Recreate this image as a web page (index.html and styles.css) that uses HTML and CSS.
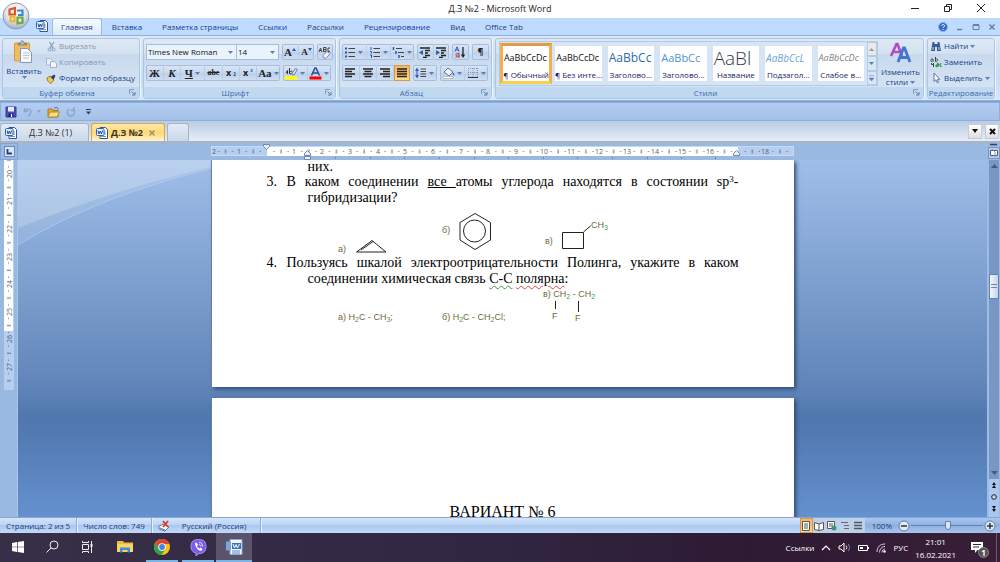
FILE: index.html
```html
<!DOCTYPE html>
<html lang="ru">
<head>
<meta charset="utf-8">
<title>Д.З №2 - Microsoft Word</title>
<link rel="stylesheet" href="styles.css">
</head>
<body>
<svg class="defs" width="0" height="0" aria-hidden="true">
  <defs>
    <symbol id="arrow" viewBox="0 0 5 3"><path d="M0 0h5L2.500 3z" fill="#5b7fb5"/></symbol>
    <symbol id="launcher" viewBox="0 0 7 7"><path d="M.5 5V.5H5" fill="none" stroke="#7f9bc2"/><path d="M2.500 2.500l3 3M6 3v3H3" fill="none" stroke="#5f7da8"/></symbol>
    <symbol id="worddoc" viewBox="0 0 12 12"><path d="M4 .5h5.500l2 2v9H4z" fill="#fff" stroke="#2d569e"/><path d="M8 5h2M8 7h2M5 9.500h5" stroke="#6f93cd"/><rect x=".5" y="1.500" width="7.500" height="7" rx="1" fill="#e8f0fb" stroke="#2d5fb0"/><path d="M2 3.500l1 3.500 1.300-3L5.500 7l1-3.500" fill="none" stroke="#1c4ba0"/></symbol>
    <symbol id="bin" viewBox="0 0 12 12"><path d="M2.500 2h2v2h3V2h2l1.500 9H7V7H5v4H1z" fill="#3c5d96"/><path d="M3 7v3M9 7v3" stroke="#b8cdec"/></symbol>
    <symbol id="lines-l" viewBox="0 0 12 10"><path d="M1 1h10M1 3.500h7M1 6h10M1 8.500h7" stroke="#222" stroke-width="1.300"/></symbol>
    <symbol id="lines-c" viewBox="0 0 12 10"><path d="M1 1h10M2.500 3.500h7M1 6h10M2.500 8.500h7" stroke="#222" stroke-width="1.300"/></symbol>
    <symbol id="lines-r" viewBox="0 0 12 10"><path d="M1 1h10M4 3.500h7M1 6h10M4 8.500h7" stroke="#222" stroke-width="1.300"/></symbol>
    <symbol id="lines-j" viewBox="0 0 12 10"><path d="M1 1h10M1 3.500h10M1 6h10M1 8.500h10" stroke="#222" stroke-width="1.300"/></symbol>
  </defs>
</svg>

<header class="titlebar">
  <h1>Д.З №2 - Microsoft Word</h1>
  <div class="winbtns">
    <button aria-label="Свернуть"><svg width="10" height="10"><path d="M1 5.500h8" stroke="#222"/></svg></button>
    <button aria-label="Восстановить"><svg width="10" height="10"><path d="M1.500 3.500h5v5h-5zM3.500 3V1.500h5v5H7" fill="none" stroke="#222"/></svg></button>
    <button aria-label="Закрыть"><svg width="10" height="10"><path d="M1 1l8 8M9 1L1 9" stroke="#222"/></svg></button>
  </div>
</header>

<nav class="tabs">
  <button class="office" aria-label="Кнопка Office">
    <svg width="28" height="28" viewBox="0 0 28 28">
      <defs><radialGradient id="orb" cx=".5" cy=".3" r=".75"><stop offset="0" stop-color="#fff"/><stop offset=".55" stop-color="#dfe5ed"/><stop offset="1" stop-color="#93a5bf"/></radialGradient></defs>
      <circle cx="14" cy="14" r="13" fill="url(#orb)" stroke="#8d9db5"/>
      <g fill="none" stroke-width="2.200"><path d="M13 12.500H7.500V7.500l5.500-1.500z" stroke="#e0542a"/><path d="M15 8.500h5.500v4.500H16" stroke="#3d86d6"/><path d="M12.500 14.500H8.500v4.500l4 .5z" stroke="#f0b22e"/><path d="M15.500 15.500h5v5l-5 1z" stroke="#6cab38"/></g>
    </svg>
  </button>
  <svg class="tabicon" width="12" height="12"><use href="#worddoc"/></svg>
  <button class="tab current">Главная</button>
  <button class="tab">Вставка</button>
  <button class="tab">Разметка страницы</button>
  <button class="tab">Ссылки</button>
  <button class="tab">Рассылки</button>
  <button class="tab">Рецензирование</button>
  <button class="tab">Вид</button>
  <button class="tab">Office Tab</button>
  <div class="docbtns">
    <button aria-label="Справка"><svg width="10" height="10"><circle cx="5" cy="5" r="4.500" fill="#2e6bd0" stroke="#8fb2e6"/><path d="M3.500 4c0-2 3-2 3 0 0 1-1.500 1-1.500 2M5 7v1" fill="none" stroke="#fff"/></svg></button>
    <button aria-label="Свернуть окно"><svg width="8" height="8"><path d="M1 6.500h5" stroke="#6b7f9f" stroke-width="1.500"/></svg></button>
    <button aria-label="Восстановить окно"><svg width="8" height="8"><path d="M1 2h6v4.500H1z" fill="none" stroke="#6b7f9f"/><path d="M1 2h6" stroke="#6b7f9f" stroke-width="2"/></svg></button>
    <button aria-label="Закрыть окно"><svg width="8" height="8"><path d="M1.500 1.500l5 5M6.500 1.500l-5 5" stroke="#6b7f9f" stroke-width="1.500"/></svg></button>
  </div>
</nav>

<section class="ribbon">
  <div class="group">
    <div class="body clip">
      <button class="big">
        <svg width="22" height="23"><rect x="1.500" y="3" width="15" height="18" rx="1" fill="#eebd62" stroke="#d59b3a"/><path d="M5 5V3.500h2.500C7.500 0 11 0 11 3.500h2.500V5z" fill="#b9c0ca" stroke="#777f8c"/><path d="M7.500 8.500h7l4 4v10h-11z" fill="#f7f9fd" stroke="#8397b8"/><path d="M10 13h6M10 15.500h6M10 18h6" stroke="#b9c5d9"/></svg>
        <span>Вставить</span><svg width="5" height="3"><use href="#arrow"/></svg>
      </button>
      <div class="stack">
        <button class="cmd off"><svg width="11" height="11"><path d="M3.500 1l3.500 6M8 1L4 7" stroke="#8c9db8" stroke-width="1.300"/><circle cx="3.500" cy="8.500" r="1.500" fill="none" stroke="#8c9db8"/><circle cx="7.500" cy="8.500" r="1.500" fill="none" stroke="#8c9db8"/></svg>Вырезать</button>
        <button class="cmd off"><svg width="11" height="11"><path d="M.5 1.500h4l2 2V8h-6z" fill="#e9eef6" stroke="#a9b8d0"/><path d="M4.500 4.500h4l2 2v4h-6z" fill="#f2f5fa" stroke="#a0b0ca"/></svg>Копировать</button>
        <button class="cmd"><svg width="11" height="11"><path d="M1 5l3-2 4 4-3 3.500C3 9.500 1 8 1 5z" fill="#f0c75e" stroke="#a37a26"/><path d="M4.500 4L8 1.500l1.500 1.200L7.500 7z" fill="#34456b"/></svg>Формат по образцу</button>
      </div>
    </div>
    <h2>Буфер обмена<svg width="7" height="7"><use href="#launcher"/></svg></h2>
  </div>

  <div class="group">
    <div class="body rows">
      <div class="row">
        <div class="combos"><label class="combo fontname"><select aria-label="Шрифт"><option>Times New Roman</option></select><svg width="5" height="3"><use href="#arrow"/></svg></label><label class="combo fontsize"><select aria-label="Размер шрифта"><option>14</option></select><svg width="5" height="3"><use href="#arrow"/></svg></label></div>
        <div class="set"><button class="w16 serif" aria-label="Увеличить размер">А<svg width="4" height="8"><path d="M0 3l2-3 2 3z" fill="#2c5aa8"/></svg></button><button class="w16 serif small" aria-label="Уменьшить размер">А<svg width="4" height="8"><path d="M0 0l2 3 2-3z" fill="#2c5aa8"/></svg></button></div>
        <div class="set"><button class="w16" aria-label="Очистить формат"><svg width="13" height="13"><path d="M1 6l1.500-4L4 6M1.500 4.500h2M5.500 1.500h2.500v4H5.500zM5.500 3.500H8M12 2h-2v3.500h2" fill="none" stroke="#444"/><path d="M5 9.500l4-4 3 2-4 5-3-1z" fill="#f3f5fb" stroke="#7d8cab"/></svg></button></div>
      </div>
      <div class="row">
        <div class="set"><button class="w17 serif b">Ж</button><button class="w17 serif b i">К</button><button class="w24 serif b"><u>Ч</u><svg width="5" height="3"><use href="#arrow"/></svg></button><button class="w18 serif strike"><s>abc</s></button><button class="w17 b">x<sub>₂</sub></button><button class="w17 b">x<sup>²</sup></button><button class="w24 serif b">Аа<svg width="5" height="3"><use href="#arrow"/></svg></button></div>
        <div class="set"><button class="w24" aria-label="Выделение цветом"><svg width="13" height="13"><path d="M1 6l1.500-2.500V7M4.500 1v6M5 5c2-3 4 2 0 2" fill="none" stroke="#333"/><path d="M6.500 7l4-5.500 2 1L9 8z" fill="#d9dfec" stroke="#6a7fa8"/><path d="M0 9h12v3.500H0z" fill="#ff0"/></svg><svg width="5" height="3"><use href="#arrow"/></svg></button><button class="w24" aria-label="Цвет текста"><svg width="13" height="13"><path d="M2.500 8.500L6 1h1l3.500 7.500M4 6h5" fill="none" stroke="#2c4f8f" stroke-width="1.600"/><path d="M.5 9.500h12v3H.5z" fill="#f00"/></svg><svg width="5" height="3"><use href="#arrow"/></svg></button></div>
      </div>
    </div>
    <h2>Шрифт<svg width="7" height="7"><use href="#launcher"/></svg></h2>
  </div>

  <div class="group">
    <div class="body rows">
      <div class="row">
        <div class="set"><button class="w24" aria-label="Маркеры"><svg width="12" height="11"><path d="M1 1.500h2M1 5.500h2M1 9.500h2" stroke="#2c5aa8" stroke-width="2"/><path d="M4.500 1.500H11M4.500 5.500H11M4.500 9.500H11" stroke="#444"/></svg><svg width="5" height="3"><use href="#arrow"/></svg></button><button class="w24" aria-label="Нумерация"><svg width="12" height="11"><path d="M2 0v3M1 4.500h1.500v2M1 8h1.500v3" fill="none" stroke="#2c5aa8"/><path d="M4.500 1.500H11M4.500 5.500H11M4.500 9.500H11" stroke="#444"/></svg><svg width="5" height="3"><use href="#arrow"/></svg></button><button class="w24" aria-label="Многоуровневый список"><svg width="13" height="11"><path d="M1.500 0v3M4 4v3M7 8v3" stroke="#2c5aa8" stroke-width="1.500"/><path d="M4 1.500h6M6 5.500h6M9 9.500h3" stroke="#444"/></svg><svg width="5" height="3"><use href="#arrow"/></svg></button></div>
        <div class="set"><button class="w16" aria-label="Уменьшить отступ"><svg width="12" height="11"><path d="M1 1h10M6 3.500h5M6 6h3M6 8.500h5M4 10.500h4" stroke="#222" stroke-width="1.300"/><path d="M4 3L0 5.500 4 8z" fill="#2c5fb5"/></svg></button><button class="w16" aria-label="Увеличить отступ"><svg width="12" height="11"><path d="M1 1h10M6 3.500h5M6 6h3M6 8.500h5M4 10.500h4" stroke="#222" stroke-width="1.300"/><path d="M1 3l4 2.500L1 8z" fill="#2c5fb5"/></svg></button></div>
        <div class="set"><button class="w17" aria-label="Сортировка"><svg width="12" height="13"><path d="M1 5.500L3 .8l2 4.700M2 4h2" fill="none" stroke="#2c5aa8"/><path d="M5 12V7.500H3.500c-2 0-2 2.500 0 2.500H5M3.500 10l-2 2" fill="none" stroke="#a33"/><path d="M9 1v9" stroke="#222" stroke-width="1.300"/><path d="M6.800 8.500h4.400L9 12z" fill="#222"/></svg></button></div>
        <div class="set"><button class="w17 b" aria-label="Знаки абзаца">¶</button></div>
      </div>
      <div class="row">
        <div class="set"><button class="w17" aria-label="По левому краю"><svg width="12" height="10"><use href="#lines-l"/></svg></button><button class="w17" aria-label="По центру"><svg width="12" height="10"><use href="#lines-c"/></svg></button><button class="w17" aria-label="По правому краю"><svg width="12" height="10"><use href="#lines-r"/></svg></button><button class="w17 on" aria-label="По ширине"><svg width="12" height="10"><use href="#lines-j"/></svg></button></div>
        <div class="set"><button class="w24" aria-label="Интервал"><svg width="12" height="12"><path d="M0 4l2-3.500L4 4zM0 8l2 3.500L4 8z" fill="#2c5fb5"/><path d="M2 3v6" stroke="#2c5fb5"/><path d="M5.500 2H11M5.500 4.500H11M5.500 7H11M5.500 9.500H11" stroke="#444"/></svg><svg width="5" height="3"><use href="#arrow"/></svg></button></div>
        <div class="set"><button class="w24" aria-label="Заливка"><svg width="13" height="12"><path d="M2 5l4-4 5 4-4 4z" fill="#edf1f8" stroke="#5f7396"/><path d="M10.500 5c2 1 2 3 1.500 4-1-1-1.500-2-1.500-4z" fill="#3c6ab8"/><path d="M1 9.500h10v2H1z" fill="#fff" stroke="#999" stroke-width=".5"/></svg><svg width="5" height="3"><use href="#arrow"/></svg></button><button class="w24" aria-label="Границы"><svg width="12" height="12"><path d="M1.500 1v9M6 1v9M10.500 1v9M1 1.500h10M1 5.500h10" stroke="#8494ad" stroke-dasharray="1 1"/><path d="M1 10.500h10" stroke="#333"/></svg><svg width="5" height="3"><use href="#arrow"/></svg></button></div>
      </div>
    </div>
    <h2>Абзац<svg width="7" height="7"><use href="#launcher"/></svg></h2>
  </div>

  <div class="group wide">
    <div class="body styles">
      <div class="gallery">
        <button class="tile sel"><span class="pv">AaBbCcDc</span><span>¶ Обычный</span></button>
        <button class="tile"><span class="pv">AaBbCcDc</span><span>¶ Без инте...</span></button>
        <button class="tile"><span class="pv h1">AaBbCc</span><span>Заголово...</span></button>
        <button class="tile"><span class="pv h2">AaBbCc</span><span>Заголово...</span></button>
        <button class="tile"><span class="pv ttl">AaBl</span><span>Название</span></button>
        <button class="tile"><span class="pv sub">AaBbCcL</span><span>Подзагол...</span></button>
        <button class="tile"><span class="pv weak">AaBbCcDc</span><span>Слабое в...</span></button>
        <div class="galscroll">
          <button class="dim" aria-label="Вверх"><svg width="5" height="3"><path d="M0 3h5L2.500 0z" fill="#9a9a9a"/></svg></button>
          <button aria-label="Вниз"><svg width="5" height="3"><use href="#arrow"/></svg></button>
          <button aria-label="Все стили"><svg width="5" height="6"><path d="M0 .5h5M0 3h5L2.500 6z" fill="#5b7fb5" stroke="#5b7fb5" stroke-width=".5"/></svg></button>
        </div>
      </div>
      <button class="big change">
        <svg width="24" height="22"><path d="M2 14L7.500 2h1L13 14M4.500 10h6" fill="none" stroke="#b04fc0" stroke-width="2.600"/><path d="M9 20l5.500-14h1L21 20M11.500 15.500h7" fill="none" stroke="#3f77cc" stroke-width="2.800"/></svg>
        <span>Изменить</span><span>стили <svg width="5" height="3"><use href="#arrow"/></svg></span>
      </button>
    </div>
    <h2>Стили<svg width="7" height="7"><use href="#launcher"/></svg></h2>
  </div>

  <div class="group">
    <div class="body edit">
      <div class="stack">
        <button class="cmd"><svg width="12" height="12"><use href="#bin"/></svg>Найти <svg width="5" height="3"><use href="#arrow"/></svg></button>
        <button class="cmd"><svg width="12" height="12"><path d="M2 5.500c-2 0-1.500-3 1-2.500v3M5.500 1v4.500c3 0 3-3 0-2.500" fill="none" stroke="#444"/><path d="M1.500 7v1.500h2V7v4" fill="none" stroke="#444"/><path d="M7 7.500c2-.5 2 3 0 3s-1-2 1-1.500M11.500 8c-2-1-2 3 0 2.500" fill="none" stroke="#2f9a3c" stroke-width="1.300"/></svg>Заменить</button>
        <button class="cmd"><svg width="12" height="12"><path d="M4 1v8.500l2-1.700 1.300 3 1.300-.6L7.300 7.300h2.500z" fill="#fff" stroke="#5a77a8"/></svg>Выделить <svg width="5" height="3"><use href="#arrow"/></svg></button>
      </div>
    </div>
    <h2 class="plain">Редактирование</h2>
  </div>
</section>

<div class="qat">
  <button aria-label="Сохранить"><svg width="12" height="12"><path d="M1 1h10v10H1z" fill="#4a4fb5" stroke="#34389a"/><path d="M3 1h6v4.500H3z" fill="#e6ebf8"/><path d="M3.500 7.500h5V11h-5z" fill="#1f2360"/><path d="M6.500 8v3" stroke="#fff" stroke-width="1.300"/></svg></button>
  <button aria-label="Отменить"><svg width="10" height="10"><path d="M1.500 1v3.500H5M2 4c3-3.500 8-1 5 3L5 9.500" fill="none" stroke="#8aa6cf" stroke-width="1.500"/></svg><svg width="4" height="3"><path d="M0 0h4L2 3z" fill="#8aa6cf"/></svg></button>
  <button aria-label="Открыть"><svg width="13" height="12"><path d="M1 3h4l1 1.500h5V11H1z" fill="#e2a838" stroke="#a97a20"/><path d="M3 6h9.500L10 11H1z" fill="#fbdb83" stroke="#b58a2c"/><path d="M7 2.500c2-2 4-1 4 1" fill="none" stroke="#3c63a8"/></svg></button>
  <button aria-label="Повторить"><svg width="10" height="10"><path d="M3 2C0 4.500 1.500 9 5 9s5-5 2-7M4.500 3.500H8V0" fill="none" stroke="#8aa6cf" stroke-width="1.500"/></svg></button>
  <button aria-label="Настройка панели"><svg width="5" height="6"><path d="M0 .5h5" stroke="#23406f"/><path d="M0 2.500h5L2.500 5.500z" fill="#23406f"/></svg></button>
</div>

<nav class="doctabs">
  <button class="dt"><svg width="12" height="12"><use href="#worddoc"/></svg>Д.З №2 (1)</button>
  <button class="dt active"><svg width="12" height="12"><use href="#worddoc"/></svg>Д.З №2<svg class="x" width="6" height="6"><path d="M.5.5l5 5M5.500.5l-5 5" stroke="#9a8a63" stroke-width="1.300"/></svg></button>
  <button class="dt blank" aria-label="Новая вкладка"></button>
  <div class="dtright">
    <button aria-label="Список вкладок"><svg width="6" height="4"><path d="M0 0h6L3 4z" fill="#111"/></svg></button>
    <button aria-label="Закрыть вкладку"><svg width="7" height="7"><path d="M1 1l5 5M6 1L1 6" stroke="#111" stroke-width="2"/></svg></button>
  </div>
</nav>

<main class="work">
  <div class="corner"><button aria-label="Табуляция"><svg width="6" height="6"><path d="M1.500 0v4.500H6" fill="none" stroke="#26406e" stroke-width="1.800"/></svg></button></div>
  <div class="hruler">
    <svg width="584" height="17" viewBox="211 143 584 17">
      <defs><pattern id="ticks" x="267" y="143" width="27.720" height="17" patternUnits="userSpaceOnUse"><path d="M6.500 8h1v1h-1zM20.500 8h1v1h-1zM13.500 6.500h1v4h-1z" fill="#566a8c"/></pattern></defs>
      <rect x="211.500" y="146.500" width="582" height="9" fill="#b6cff0" stroke="#c8daf3"/>
      <rect x="267" y="147" width="471" height="9" fill="#fff"/>
      <rect x="215" y="143" width="573" height="17" fill="url(#ticks)"/>
      <g class="num"><text x="214" y="154">2</text><text x="239" y="154">1</text><text x="294" y="154">1</text><text x="322" y="154">2</text><text x="350" y="154">3</text><text x="378" y="154">4</text><text x="405" y="154">5</text><text x="433" y="154">6</text><text x="461" y="154">7</text><text x="488" y="154">8</text><text x="516" y="154">9</text><text x="544" y="154">10</text><text x="571" y="154">11</text><text x="599" y="154">12</text><text x="627" y="154">13</text><text x="655" y="154">14</text><text x="682" y="154">15</text><text x="710" y="154">16</text><text x="765" y="154">18</text></g>
      <g fill="#eef3fb" stroke="#6f88b0"><path d="M263.500 144.500h6v2l-3 3-3-3z"/><path d="M304.500 155.500v-2l3-3 3 3v2zM304.500 156.500h6v3h-6z"/><path d="M733.500 155.500v-2l3-3 3 3v2z"/></g>
      <path d="M335.500 157v2M370.500 157v2M404.500 157v2M439.500 157v2M474.500 157v2M508.500 157v2M543.500 157v2M577.500 157v2M612.500 157v2M647.500 157v2M681.500 157v2M715.500 157v2" stroke="#6f88b0"/>
    </svg>
  </div>
  <div class="split"><svg width="13" height="17"><path d="M3 1.500h7" stroke="#2c4370" stroke-width="1.500"/><rect x="1.500" y="4.500" width="11" height="11" fill="#b7c9e4" stroke="#7e97c0"/><path d="M3.500 7.500h7v5h-7z" fill="#fff" stroke="#4c5c80"/><path d="M5 6l3 3v5" fill="none" stroke="#8a93b8"/></svg></div>

  <div class="vruler">
    <svg width="17" height="230" viewBox="0 160 17 230">
      <defs><pattern id="vticks" x="0" y="173.500" width="17" height="27.600" patternUnits="userSpaceOnUse"><path d="M8 6.500h1v1H8zM8 20.500h1v1H8zM7 13.500h4v1H7z" fill="#566a8c"/></pattern></defs>
      <rect x="4" y="160" width="10" height="230" fill="#b6cff0"/>
      <rect x="4" y="160" width="9" height="171" fill="#fff"/>
      <rect x="4" y="160" width="10" height="225" fill="url(#vticks)"/>
      <g class="num"><text transform="translate(12 174) rotate(-90)">20</text><text transform="translate(12 201) rotate(-90)">21</text><text transform="translate(12 229) rotate(-90)">22</text><text transform="translate(12 257) rotate(-90)">23</text><text transform="translate(12 284) rotate(-90)">24</text><text transform="translate(12 312) rotate(-90)">25</text><text transform="translate(12 339) rotate(-90)">26</text><text transform="translate(12 367) rotate(-90)">27</text></g>
    </svg>
  </div>

  <div class="canvas">
    <svg class="swoosh" width="210" height="90"><path d="M0 68Q100 28 210 3V0H0z" fill="#fff" opacity=".2"/><path d="M0 85Q80 35 210 4V0H0z" fill="#fff" opacity=".1"/><path d="M0 85Q80 35 210 4" fill="none" stroke="#c3d8f3" opacity=".5"/></svg>
    <article class="page first">
      <p class="item cont">них.</p>
      <p class="item"><span class="n">3.</span>В каком соединении <u>все </u>атомы углерода находятся в состоянии sp<sup>3</sup>-гибридизации?</p>
      <svg class="fig" width="471" height="49" viewBox="267 206 471 49">
        <g fill="none" stroke="#222"><path d="M356.500 252l15.500-11.500 14 11.500zM361 250l12-8.500"/><path d="M475 213.500l15.500 9v17.500l-15.500 9.500-15-9.500v-17.500z"/><circle cx="474.500" cy="231" r="11"/><path d="M562.500 232.500h21v16h-21zM583.500 232l7-6"/></g>
        <g class="chem"><text x="338" y="252">а)</text><text x="442" y="233">б)</text><text x="545" y="244">в)</text><text x="591" y="228">CH<tspan class="idx" dy="2">3</tspan></text></g>
      </svg>
      <p class="item"><span class="n">4.</span>Пользуясь шкалой электроотрицательности Полинга, укажите в каком соединении химическая связь <span class="gram">С-С</span> <span class="spell">полярна</span>:</p>
      <svg class="fig" width="471" height="42" viewBox="267 287 471 42">
        <path d="M555.500 301v8M578.500 301v11" stroke="#222"/>
        <g class="chem"><text x="338" y="320">а) H<tspan class="idx" dy="2">2</tspan><tspan dy="-2">C - CH</tspan><tspan class="idx" dy="2">3</tspan><tspan dy="-2">;</tspan></text><text x="442" y="320">б) H<tspan class="idx" dy="2">2</tspan><tspan dy="-2">C - CH</tspan><tspan class="idx" dy="2">2</tspan><tspan dy="-2">Cl;</tspan></text><text x="543" y="297">в) CH<tspan class="idx" dy="2">2</tspan><tspan dy="-2"> - CH</tspan><tspan class="idx" dy="2">2</tspan></text><text x="552" y="319">F</text><text x="575" y="321">F</text></g>
      </svg>
    </article>
    <article class="page second"><h3>ВАРИАНТ № 6</h3></article>
  </div>

  <div class="vscroll">
    <button aria-label="Прокрутка вверх"><svg width="7" height="4"><path d="M0 4h7L3.500 0z" fill="#3e5c90"/></svg></button>
    <div class="track"><div class="thumb"></div></div>
    <button aria-label="Прокрутка вниз"><svg width="7" height="4"><path d="M0 0h7L3.500 4z" fill="#3e5c90"/></svg></button>
    <div class="browse">
      <button aria-label="Предыдущая страница"><svg width="6" height="6"><path d="M1 3h4L3 0zM1 6h4L3 3z" fill="#111"/></svg></button>
      <button aria-label="Выбор объекта"><svg width="6" height="6"><circle cx="3" cy="3" r="2.300" fill="#ccd8ec" stroke="#222"/></svg></button>
      <button aria-label="Следующая страница"><svg width="6" height="6"><path d="M1 0h4L3 3zM1 3h4L3 6z" fill="#111"/></svg></button>
    </div>
  </div>
</main>

<footer class="status">
  <button class="s1">Страница: 2 из 5</button>
  <button class="s2">Число слов: 749</button>
  <button class="s3"><svg width="12" height="12"><path d="M1 6l5-2 5 3-4 4-6-2z" fill="#fff" stroke="#5b77a8"/><path d="M2 8l5 2" stroke="#5b77a8"/><path d="M5 1l5 6M10 1L5 7" stroke="#e23a22" stroke-width="1.800"/></svg>Русский (Россия)</button>
  <div class="sright">
    <div class="views">
      <button class="on" aria-label="Разметка"><svg width="10" height="10"><path d="M1.500.5h7v9h-7z" fill="#fff" stroke="#555"/><path d="M3 3h4M3 5h4M3 7h4" stroke="#555"/></svg></button>
      <button aria-label="Чтение"><svg width="10" height="10"><path d="M.5 1.500L5 3l4.500-1.500v7L5 9.500.5 8.500zM5 3v6.500" fill="#fff" stroke="#555"/></svg></button>
      <button aria-label="Веб"><svg width="10" height="10"><path d="M.5.5h7v7h-7z" fill="#fff" stroke="#555"/><path d="M2 3h4M2 5h4" stroke="#555"/><circle cx="7" cy="7" r="2.500" fill="#3f8f8a"/></svg></button>
      <button aria-label="Структура"><svg width="10" height="10"><path d="M1 1.500h7M4 4.500h5M4 7.500h5" stroke="#667"/></svg></button>
      <button aria-label="Черновик"><svg width="10" height="10"><path d="M1 1.500h8M1 4.500h8M1 7.500h8" stroke="#556" stroke-width="1.300"/></svg></button>
    </div>
    <button class="pct">100%</button>
    <button aria-label="Уменьшить"><svg width="12" height="12"><circle cx="6" cy="6" r="5" fill="#dfe9f7" stroke="#5f7fae"/><path d="M3 6h6" stroke="#333" stroke-width="1.500"/></svg></button>
    <input type="range" min="0" max="100" value="51" aria-label="Масштаб">
    <button aria-label="Увеличить"><svg width="12" height="12"><circle cx="6" cy="6" r="5" fill="#dfe9f7" stroke="#5f7fae"/><path d="M3 6h6M6 3v6" stroke="#333" stroke-width="1.500"/></svg></button>
  </div>
</footer>

<footer class="taskbar">
  <button aria-label="Пуск"><svg width="12" height="12"><path d="M0 2l5-1v4.700H0zM5.700.9L12 0v5.700H5.700zM0 6.300h5V11l-5-1zM5.700 6.300H12V12l-6.300-1z" fill="#fff"/></svg></button>
  <button aria-label="Поиск"><svg width="13" height="13"><circle cx="8" cy="5" r="4" fill="none" stroke="#eee"/><path d="M5 8l-4.500 4.500" stroke="#eee"/></svg></button>
  <button aria-label="Представление задач"><svg width="13" height="12"><path d="M1.500 3.500h6v5h-6zM1.500 0v1.500h6V0M1.500 12v-1.500h6V12M10.500 0v12" fill="none" stroke="#eee"/><path d="M9.500 3h2v3h-2z" fill="#eee"/></svg></button>
  <button class="ex" aria-label="Проводник"><svg width="16" height="13"><path d="M0 1h6l1 1.500h9V12H0z" fill="#f5b93a"/><path d="M0 4h16v8H0z" fill="#fbd363"/><path d="M3 12.500V7.500h10v5h-2.500V10h-5v2.500z" fill="#3592d8"/></svg></button>
  <button class="run" aria-label="Chrome"><svg width="16" height="16"><circle cx="8" cy="8" r="8" fill="#fbc11a"/><path d="M1.100 4A8 8 0 0 1 15 4L14.900 5H8a3.500 3.500 0 0 0-3 5z" fill="#e04232"/><path d="M1.100 4A8 8 0 0 0 7.500 16L11 10.500a3.500 3.500 0 0 1-6-.5z" fill="#2fa350"/><circle cx="8" cy="8" r="3.800" fill="#fff"/><circle cx="8" cy="8" r="2.900" fill="#4285e8"/></svg></button>
  <button class="run" aria-label="Viber"><svg width="17" height="17"><path d="M8.500.5c5 0 7.500 2 7.500 7s-2.500 7-7 7L6 16.800V14c-3.500-.8-5-3-5-6.500 0-5 2.500-7 7.500-7z" fill="#7b5cec" stroke="#a996f5"/><path d="M5 4l1.500-.5L8 6l-1 1c.5 1.500 1 2 2.500 2.500l1-1 2 1.500-.5 1.500C10 13 5 9 5 4z" fill="#fff"/><path d="M9 3.500c2.500 0 3.500 1.500 3.500 4M9 5.500c1.200 0 1.700.7 1.700 1.800" fill="none" stroke="#fff" stroke-width=".8"/></svg></button>
  <button class="run act" aria-label="Word"><svg width="17" height="16"><path d="M4 .5h12v15H4z" fill="#f2f6fc" stroke="#8aa8d6"/><path d="M6 12h8M6 14h8" stroke="#5a85c8"/><path d="M6 4h9v6H6z" fill="#3d6fb8"/><path d="M7 5l1.500 4L10 5.500 11.500 9 13.500 5" fill="none" stroke="#fff"/><path d="M0 2.500h5v9H0z" fill="#7ea4dc"/></svg></button>
  <div class="tray">
    <span>Ссылки</span>
    <svg width="10" height="6"><path d="M1 5l4-4 4 4" fill="none" stroke="#fff" stroke-width="1.200"/></svg>
    <svg width="13" height="11"><path d="M1 4h2l3-3v9L3 7H1z" fill="none" stroke="#fff"/><path d="M8 3.500c1 1 1 3 0 4" fill="none" stroke="#fff"/><path d="M10 2c2 2 2 5 0 7" fill="none" stroke="#998da3"/></svg>
    <svg width="11" height="8"><path d="M.5 1.500h9v5h-9z" fill="none" stroke="#fff"/><path d="M2 3h3v2H2z" fill="#fff"/><path d="M10.500 3v2" stroke="#fff"/></svg>
    <svg width="10" height="10"><path d="M1 9C1 4 4 1 9 1M3.500 9.500C3.500 6 6 3.500 9 3.500M6 9.500C6 7.500 7 6 9 6" fill="none" stroke="#d5ccd8"/><circle cx="8.500" cy="8.500" r="1.200" fill="#fff"/></svg>
    <span>РУС</span>
    <time>21:01<br>16.02.2021</time>
    <button class="note" aria-label="Уведомления"><svg width="14" height="14"><path d="M0 1h12v8H6.500L4 12V9H0z" fill="#fff"/><path d="M2 3.500h8M2 6h6" stroke="#3a2440"/></svg><b>1</b></button>
  </div>
</footer>
</body>
</html>
```

FILE: styles.css
```css
* { box-sizing: border-box; }
html, body { margin: 0; }
body {
  height: 100vh;
  display: flex;
  flex-direction: column;
  overflow: hidden;
  font-family: "Open Sans", "Noto Sans", sans-serif;
  font-size: 8px;
  line-height: 10px;
  color: #15428b;
  background: #9ab9e1;
}
button, select {
  font: inherit;
  color: inherit;
  background: none;
  border: 0;
  margin: 0;
  padding: 0;
  white-space: nowrap;
}
button { display: flex; align-items: center; justify-content: center; }
h1, h2, h3, p { margin: 0; font-weight: normal; font-size: inherit; }
svg { display: block; flex: none; }
.defs { position: absolute; }

.titlebar { height: 18px; flex: none; position: relative; background: #fff; color: #222; display: flex; align-items: center; justify-content: center; }
.titlebar h1 { font-size: 9px; }
.winbtns { position: absolute; right: 14px; top: 3px; display: flex; gap: 23px; }

.tabs { height: 17px; flex: none; background: #bfdbff; display: flex; align-items: stretch; padding-left: 36px; position: relative; }
.office { position: absolute; left: 2px; top: -16px; z-index: 2; }
.tabicon { margin: 2px 4px 0 0; }
.tab { padding: 0 10px; }
.tab.current { padding: 0 8px; background: linear-gradient(#f7fbff, #dfeaf7); border: 1px solid #9dbde6; border-bottom: 0; border-radius: 3px 3px 0 0; }
.docbtns { margin-left: auto; display: flex; align-items: center; gap: 8px; padding-right: 4px; }

.ribbon { flex: none; display: flex; gap: 3px; padding: 2px 5px 1px 2px; background: linear-gradient(#dbe8f7, #c9dcf3 70%, #d8e8fb); border: 1px solid #8fb1dc; border-width: 1px 0 1px; box-shadow: 0 1px #7f9fca; }
.group { display: flex; flex-direction: column; border: 1px solid #a9c5e7; border-radius: 3px; background: linear-gradient(#dfe9f5, #d3e1f1 25%, #c8d9ee 26%, #d9e7f5); overflow: hidden; box-shadow: 1px 0 #eef5fd; }
.group.wide { flex: 1; min-width: 0; }
.body { height: 48px; display: flex; }
.group h2 { height: 11px; background: #c1d8f1; color: #3e6aaa; display: flex; align-items: center; justify-content: center; position: relative; padding-right: 8px; }
.group h2.plain { padding: 0; }
.group h2 svg { position: absolute; right: 3px; top: 2px; }
.clip { padding: 0 4px 0 3px; gap: 4px; }
.big { flex-direction: column; width: 36px; justify-content: flex-start; padding-top: 1px; }
.big > span { display: flex; align-items: center; gap: 2px; }
.big > svg + span { margin-top: 3px; }
.stack { display: flex; flex-direction: column; gap: 6px; padding-top: 2px; align-items: flex-start; }
.cmd { gap: 2px; height: 10px; }
.off { color: #8d98aa; }

.rows { flex-direction: column; gap: 5px; padding: 5px 2px 0; }
.row { display: flex; gap: 3px; height: 16px; }
.set { display: flex; border-radius: 2px; background: linear-gradient(#dbe7f6, #c6d8ef 50%, #bbd0ea 51%, #d0e0f3); box-shadow: inset 0 0 0 1px #a5bedd; color: #222; }
.set button { gap: 2px; }
.set button + button { border-left: 1px solid #b9cde7; }
.w16 { width: 16px; }
.w17 { width: 17px; }
.w18 { width: 18px; }
.w24 { width: 24px; }
.b { font-weight: bold; font-size: 9px; }
.serif { font-family: "Liberation Serif", serif; font-weight: bold; font-size: 11px; }
.set .serif.w16 { gap: 0; }
.serif.small { font-size: 9px; }
.serif.strike { font-size: 8px; }
.i { font-style: italic; }
.set sub, .set sup { line-height: 0; font-size: 7px; color: #2c5aa8; }
.on { background: linear-gradient(#f7b56b, #fbbf6a 50%, #fde08a); box-shadow: inset 0 0 0 1px #d29a4c; }
.combos { display: flex; }
.combo { display: flex; align-items: center; border: 1px solid #a5bedd; background: #eaf2fb; padding-right: 3px; color: #111; }
.combo select { flex: 1; min-width: 0; appearance: none; padding-left: 1px; outline: 0; }
.fontname { width: 91px; }
.fontsize { width: 42px; border-left: 0; }

.styles { padding: 2px 0 0 3px; justify-content: space-between; }
.gallery { display: flex; flex: 1; min-width: 0; height: 45px; background: #d5e5f6; border: 1px solid #b3cbe8; }
.tile { flex: 1; min-width: 0; flex-direction: column; justify-content: flex-end; gap: 4px; margin: 4px 3px; padding-bottom: 1px; background: #fff; color: #1c1c6b; overflow: hidden; }
.tile.sel { margin: 1px 0; flex-basis: 6px; border: 3px solid #f5b54a; border-color: #e39a43 #f3b04d #f9d04c; }
.pv { width: 100%; text-align: left; font-size: 9px; line-height: 16px; overflow: hidden; color: #111; padding-left: 1px; }
.pv.h1 { font-size: 12px; color: #2a6ea6; }
.pv.h2 { font-size: 11px; color: #4f94cf; }
.pv.ttl { font-size: 19px; font-weight: 300; color: #333c47; }
.pv.sub { font-size: 10px; font-style: italic; color: #69a5d8; }
.pv.weak { font-size: 9px; font-style: italic; color: #808080; }
.galscroll { width: 10px; display: flex; flex-direction: column; }
.galscroll button { flex: 1; border: 1px solid #b3cbe8; background: #d8e6f6; }
.galscroll .dim { background: #e9e9e9; }
.change { width: 45px; }
.edit { padding: 0 2px; width: 66px; }

.qat { height: 19px; flex: none; margin-top: 1px; display: flex; align-items: center; gap: 6px; padding: 0 4px; background: linear-gradient(#b2cdf0, #a5c1e8); border: 1px solid #8fafdb; }
.qat button { gap: 4px; }
.qat button:last-child { margin-left: 4px; }

.doctabs { height: 22px; flex: none; display: flex; align-items: flex-end; gap: 2px; background: linear-gradient(#b9cce6, #e6eef8); border-bottom: 2px solid #aab4c2; color: #333; font-size: 9px; }
.dt { height: 18px; width: 89px; justify-content: flex-start; gap: 12px; padding: 0 4px; border: 1px solid #a6b4c6; border-bottom: 0; border-radius: 3px 3px 0 0; background: linear-gradient(#e2eaf4, #cbd8ea); }
.dt.active { width: 74px; gap: 3px; font-weight: bold; color: #3c3524; border-color: #d1a655; background: linear-gradient(#ffe9a8, #ffd876 50%, #fff4cf); }
.dt .x { margin-left: 3px; }
.dt.blank { width: 22px; }
.dtright { margin-left: auto; align-self: center; display: flex; gap: 3px; padding-right: 1px; }
.dtright button { width: 14px; height: 15px; background: linear-gradient(#fff, #dedede); border: 1px solid #c9ccd2; }

.work { flex: 1; min-height: 0; display: grid; grid-template: 17px minmax(0, 1fr) / 18px minmax(0, 1fr) 13px; }
.corner { border: 1px solid #82a3d6; display: flex; align-items: center; justify-content: center; }
.corner button { width: 11px; height: 11px; border: 1px solid #6389cf; background: #dbe7f7; }
.hruler { display: flex; justify-content: center; overflow: hidden; background: #9ab9e1; }
.num { font-size: 7px; fill: #4c5f80; text-anchor: middle; }
.vruler { background: #9ab9e1; border-right: 1px solid #aac6eb; overflow: hidden; }
.canvas { position: relative; overflow: hidden; background: linear-gradient(#9fbfe9, #6286ba 62%, #5078ae 72%, #5379b1 76%, #6491cf); }
.swoosh { position: absolute; left: 0; top: 0; }
.page { position: relative; width: 582px; max-width: 100%; margin: 0 auto; background: #fff; color: #000; box-shadow: 2px 2px 4px #2e4a74, -1px 0 #6f86a8; padding: 0 55px; font-family: "Liberation Serif", serif; font-size: 14px; line-height: 16px; }
.first { padding-bottom: 58px; }
.second { margin-top: 11px; padding-top: 106px; height: 300px; }
.second h3 { text-align: center; font-size: 16px; }
.item { padding-left: 41px; text-indent: -41px; text-align: justify; }
.item.cont { text-indent: 0; line-height: 14px; }
.item sup { font-size: 9px; line-height: 0; vertical-align: 4px; }
.n { display: inline-block; width: 20px; text-indent: 0; text-align: left; }
.gram { text-decoration: underline wavy #3a9a3a 1px; text-underline-offset: 2px; }
.spell { text-decoration: underline wavy #e04040 1px; text-underline-offset: 2px; }
.fig { max-width: 100%; }
.chem { font-family: "Liberation Sans", sans-serif; font-size: 9px; fill: #74683a; }
.idx { font-size: 7px; fill: #2f9e58; }

.vscroll { display: flex; flex-direction: column; background: #7798c4; border-left: 2px solid #9dbbe4; border-right: 1px solid #9dbbe4; }
.vscroll button { height: 12px; }
.track { flex: 1; padding-top: 102px; }
.thumb { height: 25px; border: 1px solid #6480b0; border-radius: 1px; background: linear-gradient(#75859e, #75859e) center 9px / 6px 1px no-repeat, linear-gradient(#75859e, #75859e) center 12px / 6px 1px no-repeat, linear-gradient(90deg, #f3f6fb, #c4d4ea); }
.browse { background: #a9c6ee; padding-bottom: 2px; }
.browse button { width: 100%; }

.status { height: 16px; flex: none; display: flex; align-items: stretch; background: linear-gradient(#d5e5fa, #bcd4f4 45%, #a9c7ef 50%, #c2daf8); border-top: 1px solid #86a7d6; color: #1c3c78; }
.status > button { border-right: 1px solid #8daedb; box-shadow: 1px 0 #e6f0fd; }
.s1 { padding: 0 6px; }
.s2 { padding: 0 6px; }
.s3 { gap: 12px; padding: 0 14px 0 6px; }
.sright { margin-left: auto; display: flex; align-items: center; padding-right: 4px; gap: 1px; background: linear-gradient(#a9c6ee, #8fb1e0 50%, #a6c4ee); }
.views { display: flex; align-self: stretch; background: #bcd0ea; margin-right: 6px; }
.views button { width: 13px; }
.pct { margin-right: 5px; }
input[type=range] { appearance: none; width: 72px; height: 12px; margin: 0; background: linear-gradient(#5f80b4, #5f80b4) center / 100% 1px no-repeat; }
input[type=range]::-webkit-slider-thumb { appearance: none; width: 6px; height: 9px; background: #dce8f7; border: 1px solid #5f7fae; border-radius: 1px 1px 3px 3px; }

.taskbar { height: 29px; flex: none; display: flex; background: linear-gradient(90deg, #382f48, #302642 50%, #2e1a33 75%, #391f38); color: #fff; }
.taskbar > button { width: 35px; border-bottom: 2px solid transparent; }
.taskbar > .ex { width: 39px; }
.taskbar > .run { border-color: #76b5e6; margin: 0 2px; width: 32px; padding-top: 1px; }
.taskbar > .act { background: #5b5369; width: 36px; margin: 0; }
.tray { margin-left: auto; display: flex; align-items: center; gap: 7px; }
.tray time { text-align: center; line-height: 13px; font-size: 8px; }
.note { position: relative; width: 34px; padding-right: 4px; align-self: stretch; border-right: 1px solid #6c5a70; margin-right: 3px; }
.note b { position: absolute; left: 15px; top: 14px; width: 11px; height: 11px; border-radius: 6px; background: #555; border: 1px solid #888; line-height: 9px; text-align: center; }
```
